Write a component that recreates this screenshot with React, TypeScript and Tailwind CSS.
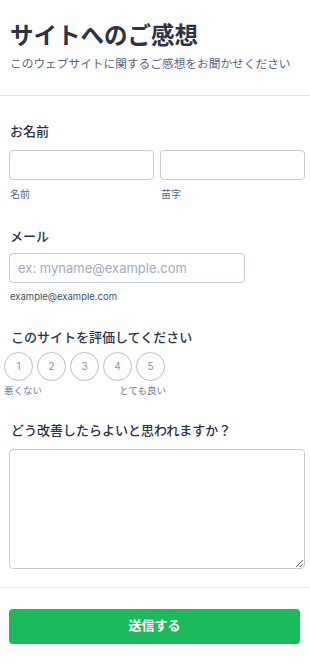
import React, { useState } from "react";

const font = { fontFamily: 'Inter, "Noto Sans CJK JP", sans-serif' };

export default function App() {
  const [rating, setRating] = useState<number | null>(null);

  return (
    <div className="w-[310px] min-h-[668px] bg-white text-[#2c3345]" style={font}>
      {/* Header */}
      <div className="px-[10px] pt-[21px] pb-[22px] border-b border-[#e3e5ea]">
        <h1 className="text-[23.5px] leading-[30px] font-bold text-[#2c3345]">サイトへのご感想</h1>
        <p className="mt-[4px] text-[11.7px] leading-[18px] text-[#57647e] whitespace-nowrap">
          このウェブサイトに関するご感想をお聞かせください
        </p>
      </div>

      {/* Name */}
      <div className="pl-[9px] pr-[5px] pt-[26px]">
        <label className="block text-[13px] leading-[18px] font-medium pl-[1px]">お名前</label>
        <div className="mt-[10px] grid grid-cols-2 gap-[6px]">
          <div>
            <input className="w-full h-[30px] border border-[#c3cad8] rounded-[4px] px-2 text-[13px] outline-none" />
            <span className="block mt-[7px] pl-[1px] text-[10px] text-[#57647e]">名前</span>
          </div>
          <div>
            <input className="w-full h-[30px] border border-[#c3cad8] rounded-[4px] px-2 text-[13px] outline-none" />
            <span className="block mt-[7px] pl-[1px] text-[10px] text-[#57647e]">苗字</span>
          </div>
        </div>
      </div>

      {/* Email */}
      <div className="px-[9px] pt-[25px]">
        <label className="block text-[13px] leading-[18px] font-medium pl-[1px]">メール</label>
        <input
          placeholder="ex: myname@example.com"
          className="mt-[8px] w-[236px] h-[30px] border border-[#c3cad8] rounded-[4px] px-[8px] text-[13px] placeholder:text-[#a4abba] outline-none"
        />
        <span className="block mt-[7px] pl-[1px] text-[9.5px] text-[#454f63]">example@example.com</span>
      </div>

      {/* Rating */}
      <div className="pt-[24px]">
        <label className="block px-[11px] text-[13px] leading-[18px] font-medium">このサイトを評価してください</label>
        <div className="mt-[6px] pl-[4px] w-[170px]">
          <div className="flex gap-[4px]">
            {[1, 2, 3, 4, 5].map((n) => (
              <button
                key={n}
                onClick={() => setRating(n)}
                className={`w-[29px] h-[29px] rounded-full border flex items-center justify-center text-[10px] ${
                  rating === n ? "border-[#1dbf5e] bg-[#1dbf5e] text-white" : "border-[#b7bcc7] text-[#8a93a6]"
                }`}
              >
                {n}
              </button>
            ))}
          </div>
          <div className="mt-[3px] flex justify-between w-[162px] text-[9.5px] text-[#6f7a8f]">
            <span>悪くない</span>
            <span>とても良い</span>
          </div>
        </div>
      </div>

      {/* Feedback */}
      <div className="pl-[9px] pr-[5px] pt-[22px] pb-[18px] border-b border-[#eceef2]">
        <label className="block pl-[2px] text-[13px] leading-[18px] font-medium">どう改善したらよいと思われますか？</label>
        <textarea className="mt-[10px] block w-full h-[120px] border border-[#c3cad8] rounded-[4px] p-2 text-[13px] outline-none" />
      </div>

      {/* Submit */}
      <div className="px-[9px] pt-[21px] pb-[22px]">
        <button className="w-[291px] h-[35px] rounded-[4px] bg-[#1bbb5c] text-white text-[13px] font-bold">
          送信する
        </button>
      </div>
    </div>
  );
}
